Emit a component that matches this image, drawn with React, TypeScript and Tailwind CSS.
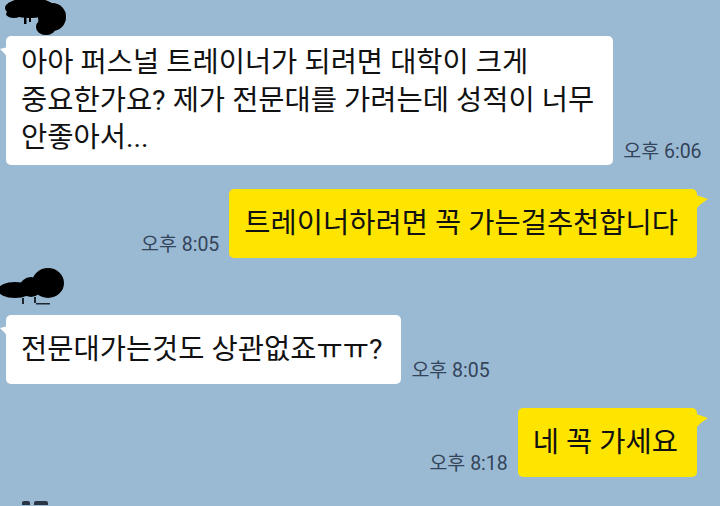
const font = { fontFamily: 'Roboto, "Noto Sans CJK KR", sans-serif' };

type BubbleProps = {
  mine?: boolean;
  lines: string[];
  time: string;
  className?: string;
};

function Tail({ mine }: { mine?: boolean }) {
  if (mine) {
    return (
      <svg
        width="12"
        height="14"
        viewBox="0 0 12 14"
        className="absolute -right-[11px] top-[6px]"
      >
        <path d="M0 0 L12 4 Q5 8 0 14 Z" fill="#fee500" />
      </svg>
    );
  }
  return (
    <svg
      width="8"
      height="12"
      viewBox="0 0 8 12"
      className="absolute -left-[6px] top-[11px]"
    >
      <path d="M8 0 L0 2 Q5 6 8 12 Z" fill="#ffffff" />
    </svg>
  );
}

function Time({ children }: { children: string }) {
  return (
    <span className="text-[19.5px] leading-none text-[#34445a] mb-[3px] whitespace-nowrap">
      {children}
    </span>
  );
}

function Bubble({ mine, lines, time, className }: BubbleProps) {
  const multi = lines.length > 1;
  return (
    <div
      className={`shrink-0 flex items-end gap-[10px] ${mine ? "justify-end" : "justify-start"} ${className ?? ""}`}
    >
      {mine && <Time>{time}</Time>}
      <div
        className={`relative rounded-[5px] pl-[15px] pr-[19px] text-[28.5px] text-[#111] whitespace-nowrap ${
          mine ? "bg-[#fee500]" : "bg-white"
        } ${multi ? "py-[8px] leading-[37.5px]" : "h-[69px] flex items-center leading-[37px]"}`}
      >
        <Tail mine={mine} />
        <div>
          {lines.map((l, i) => (
            <div key={i}>{l}</div>
          ))}
        </div>
      </div>
      {!mine && <Time>{time}</Time>}
    </div>
  );
}

// blacked-out sender names
function NameScribble() {
  return (
    <svg width="66" height="36" viewBox="0 0 66 36" className="shrink-0 -ml-[4px]">
      <g fill="#000" stroke="#d5e2ec" strokeWidth="0.6">
        <ellipse cx="28" cy="8" rx="25" ry="10" />
        <ellipse cx="50" cy="17" rx="14" ry="14" />
        <ellipse cx="44" cy="27" rx="10" ry="8" />
      </g>
      <g fill="#000">
        <ellipse cx="28" cy="8" rx="25" ry="10" />
        <ellipse cx="50" cy="17" rx="14" ry="14" />
        <ellipse cx="44" cy="27" rx="10" ry="8" />
        <rect x="22" y="14" width="2.5" height="10" />
        <rect x="27" y="15" width="2" height="7" />
        <ellipse cx="12" cy="14" rx="8" ry="4" />
      </g>
    </svg>
  );
}

function NameScribble2() {
  return (
    <svg width="66" height="42" viewBox="0 0 66 42" className="-ml-[6px]">
      <g fill="#000">
        <ellipse cx="15" cy="24" rx="17" ry="8" />
        <ellipse cx="31" cy="21" rx="11" ry="10" />
        <ellipse cx="48" cy="17" rx="16" ry="15" />
      </g>
      <g fill="#1c2530">
        <rect x="22" y="32" width="2" height="6" />
        <rect x="34" y="31" width="2" height="6" />
        <rect x="36" y="37" width="14" height="1.5" />
      </g>
    </svg>
  );
}

export default function App() {
  return (
    <div
      className="w-[720px] h-[506px] overflow-hidden bg-[#9abad3] pl-[6px] pr-[23px] flex flex-col"
      style={font}
    >
      <NameScribble />
      <Bubble
        lines={[
          "아아 퍼스널 트레이너가 되려면 대학이 크게",
          "중요한가요? 제가 전문대를 가려는데 성적이 너무",
          "안좋아서...",
        ]}
        time="오후 6:06"
      />
      <Bubble
        mine
        className="mt-[24px]"
        lines={["트레이너하려면 꼭 가는걸추천합니다"]}
        time="오후 8:05"
      />
      <div className="shrink-0 mt-[8px]">
        <NameScribble2 />
      </div>
      <Bubble
        className="mt-[7px]"
        lines={["전문대가는것도 상관없죠ㅠㅠ?"]}
        time="오후 8:05"
      />
      <Bubble
        mine
        className="mt-[24px]"
        lines={["네 꼭 가세요"]}
        time="오후 8:18"
      />
      <div className="shrink-0 mt-[24px] flex gap-[4px] pl-[16px]">
        <div className="w-[8px] h-[4px] bg-[#2a3644] rounded-t-[2px]" />
        <div className="w-[14px] h-[4px] bg-[#2a3644] rounded-t-[2px]" />
      </div>
    </div>
  );
}
